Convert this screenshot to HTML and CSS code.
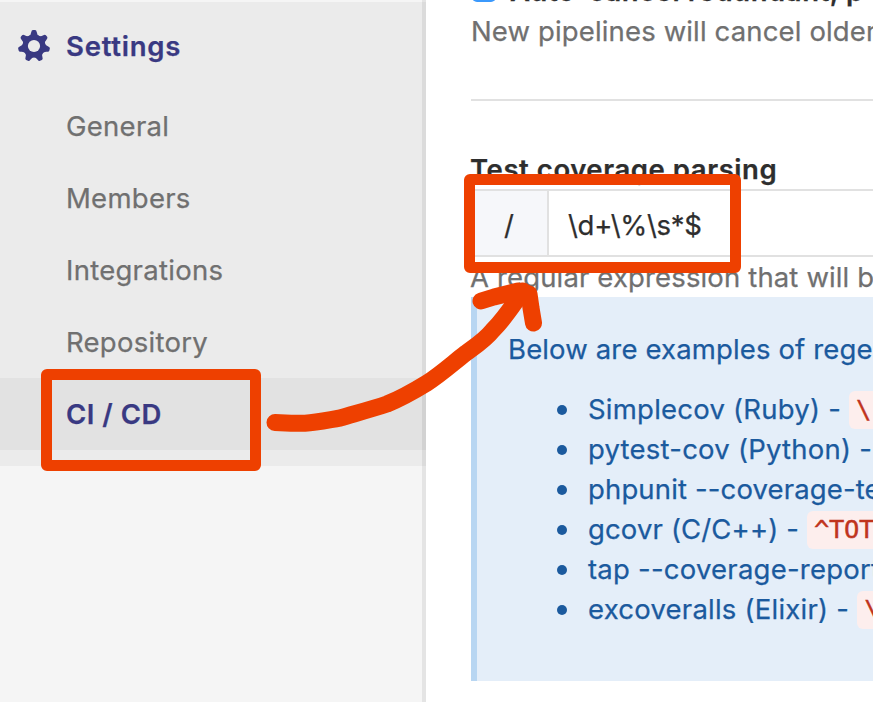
FILE: index.html
```
<!DOCTYPE html>
<html lang="en">
<head>
<meta charset="utf-8">
<title>CI / CD Settings</title>
<link rel="stylesheet" href="styles.css">
</head>
<body>
<div class="page">
  <nav class="sidebar">
    <div class="section">
      <a class="section-title">
        <svg class="gear" viewBox="0 0 32 32" width="32" height="32"><g fill="#393982"><circle cx="16" cy="16" r="11.300"/><path id="tooth" d="M10.800 6Q13 5 13.300 2Q13.500 0 15 0h2Q18.500 0 18.700 2Q19 5 21.200 6L16 10Z"/><use href="#tooth" transform="rotate(51.430 16 16)"/><use href="#tooth" transform="rotate(102.860 16 16)"/><use href="#tooth" transform="rotate(154.290 16 16)"/><use href="#tooth" transform="rotate(205.710 16 16)"/><use href="#tooth" transform="rotate(257.140 16 16)"/><use href="#tooth" transform="rotate(308.570 16 16)"/></g><circle cx="16" cy="16" r="6.100" fill="#ebebeb"/></svg>
        <span>Settings</span>
      </a>
      <a class="item">General</a>
      <a class="item">Members</a>
      <a class="item">Integrations</a>
      <a class="item">Repository</a>
      <a class="item active">CI / CD</a>
    </div>
  </nav>
  <main class="content">
    <div class="check-row"><span class="checkbox"></span><span class="check-label">Auto-cancel redundant, p</span></div>
    <p class="help first">New pipelines will cancel older</p>
    <hr class="divider">
    <label class="field-label">Test coverage parsing</label>
    <div class="input-group"><span class="prefix">/</span><span class="field">\d+\%\s*$</span></div>
    <p class="help second">A regular expression that will b</p>
    <section class="info">
      <p class="intro">Below are examples of rege</p>
      <ul class="examples">
        <li><span class="wide">Simplecov (Ruby) -</span><code>\</code></li>
        <li><span class="wide">pytest-cov (Python) -</span></li>
        <li><span>phpunit --coverage-te</span></li>
        <li><span>gcovr (C/C++) -</span><code>^TOT</code></li>
        <li><span class="wide">tap --coverage-report</span></li>
        <li><span class="wide">excoveralls (Elixir) -</span><code>\</code></li>
      </ul>
    </section>
  </main>
  <div class="mark mark-nav"></div>
  <div class="mark mark-field"></div>
  <svg class="arrow" width="873" height="702" viewBox="0 0 873 702" fill="none" stroke="#ee4000" stroke-width="17" stroke-linecap="round" stroke-linejoin="round"><path d="M275 422.500 291 423.200H305C317 422.500 328 420 340 418C357 413 372 409 387 404C402 398 414 391 427 383C441 374 453 363 466 353C477 345 485 340 493 330C505 318 513 305 523 291"/><path d="M481 301 494 297 518 291 529 294 531 308 533.500 323"/></svg>
</div>
</body>
</html>
```
FILE: styles.css
```
* { box-sizing: border-box; }
body { margin: 0; background: #fff; font: 27.5px/40px Inter, "Liberation Sans", sans-serif; color: #2e2e2e; overflow: hidden; -webkit-text-stroke: .25px; }
p, ul { margin: 0; padding: 0; }
.page { position: relative; display: flex; width: 873px; height: 702px; overflow: hidden; }
.sidebar { width: 426px; flex: none; padding-top: 2px; background: #f5f5f5; box-shadow: inset -4px 0 0 #e4e4e4; }
.section { height: 464px; background: #ebebeb; box-shadow: inset -4px 0 0 #dbdbdb; }
.section-title { display: flex; align-items: center; height: 88px; padding-left: 18px; gap: 16px; color: #393982; font-weight: 600; letter-spacing: .75px; }
.gear { flex: none; }
.item { display: flex; align-items: center; height: 72px; padding-left: 66px; color: #707070; letter-spacing: .27px; }
.item.active { color: #393982; background: #e2e2e2; font-weight: 600; letter-spacing: .5px; box-shadow: inset -4px 0 0 #d2d2d2; }
.content { flex: none; width: 447px; padding-left: 45px; white-space: nowrap; }
.check-row { display: flex; align-items: flex-end; gap: 14px; height: 11px; }
.checkbox { width: 24px; height: 24px; margin: 0 0 9px 1px; border-radius: 5px; background: #3b99fc; flex: none; }
.check-label { font-weight: 600; letter-spacing: .56px; }
.help { color: #707070; letter-spacing: .14px; }
.divider { height: 2px; margin: 0; border: 0; background: #e1e1e1; }
.first { height: 88px; }
.field-label { display: block; height: 88px; padding-top: 48px; font-weight: 600; letter-spacing: .56px; text-indent: -1px; }
.input-group { display: flex; height: 68px; border: 2px solid #e1e1e1; border-right: 0; }
.prefix { width: 76px; display: flex; align-items: center; justify-content: center; padding: 4px 2px 0 0; background: #f6f7fa; border-right: 2px solid #e1e1e1; }
.field { display: flex; align-items: center; padding: 4px 0 0 19px; letter-spacing: -.3px; }
.second { height: 40px; text-indent: -1px; }
.info { height: 384px; padding: 32px 0 0 31px; border-left: 6px solid #b8d6f2; background: #e4eef9; color: #1b5a9e; letter-spacing: .14px; }
.intro { margin-bottom: 21px; }
.examples { padding-left: 80px; list-style: none; }
.examples li { display: flex; align-items: center; height: 40px; }
.examples li span { margin-top: -2px; }
.examples li::before { content: ""; width: 10px; height: 10px; margin: 0 21px 0 -31px; border-radius: 50%; background: #1b5a9e; flex: none; }
.wide { letter-spacing: .23px; }
code { flex: none; height: 38px; margin-left: 8px; padding: 0 7px; border-radius: 6px; background: #fdeeed; color: #c0341d; font: 25.5px/37px "DejaVu Sans Mono", monospace; letter-spacing: -.35px; -webkit-text-stroke: .4px #c0341d; }
.mark { position: absolute; border: 11px solid #ee4000; border-radius: 6px; }
.mark-nav { left: 41px; top: 369px; width: 220px; height: 102px; }
.mark-field { left: 464px; top: 174px; width: 277px; height: 99px; }
.arrow { position: absolute; left: 0; top: 0; }
```
